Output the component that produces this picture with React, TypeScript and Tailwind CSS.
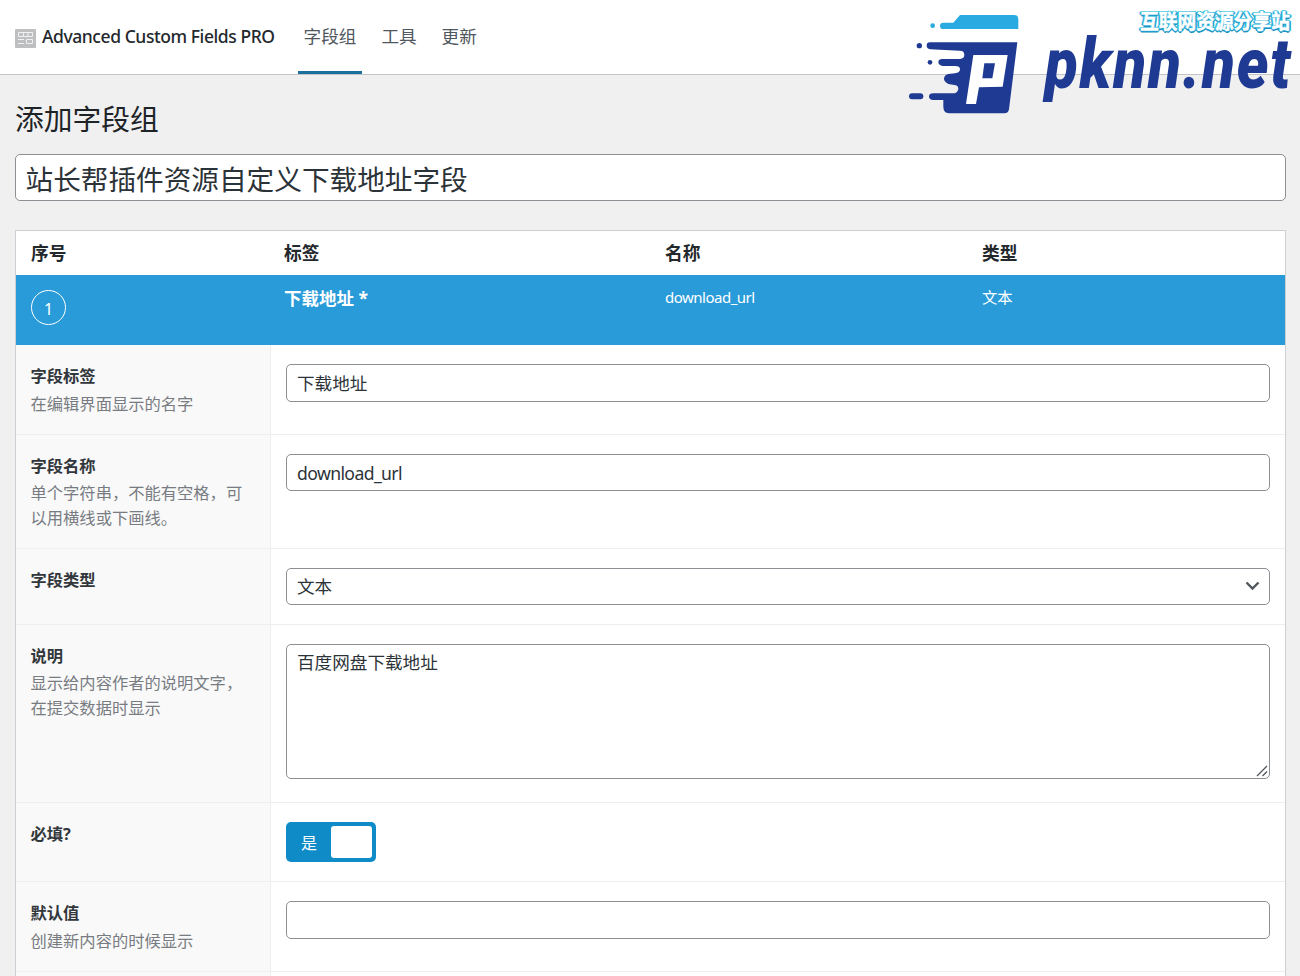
import React from "react";

const fieldCls =
  "block w-full rounded-[5px] border border-[#8c8f94] bg-white px-[10px] text-[17.6px] text-[#2c3338] outline-none";

function Row({
  label,
  desc,
  h,
  gap = "mt-[2px]",
  children,
}: {
  label: string;
  desc?: string[];
  h: string;
  gap?: string;
  children?: React.ReactNode;
}) {
  return (
    <div className={`flex border-b border-[#eeeeee] ${h}`}>
      <div className="w-[255px] shrink-0 border-r border-[#eeeeee] bg-[#f9f9f9] pl-[14.5px] pt-[19px]">
        <div className="text-[16.3px] font-bold leading-[25px] text-[#32373c]">{label}</div>
        {desc && (
          <div className={`${gap} text-[16.3px] leading-[25px] text-[#787c82]`}>
            {desc.map((d) => (
              <div key={d}>{d}</div>
            ))}
          </div>
        )}
      </div>
      <div className="flex-1 px-[15px] pt-[19px]">{children}</div>
    </div>
  );
}

function Logo() {
  return (
    <div className="pointer-events-none absolute left-[905px] top-0 h-[120px] w-[395px]">
      <svg className="absolute left-0 top-[10px]" width="120" height="108" viewBox="0 0 360 324">
        <circle cx="83" cy="47" r="7" fill="#29abe2" />
        <path
          d="M115,38 L145,38 L165,15 L328,15 Q340,15 340,27 L340,57 L115,57 Q105,57 105,47 Q105,38 115,38 Z"
          fill="#29abe2"
        />
        <circle cx="43" cy="107" r="8" fill="#1f3a93" />
        <circle cx="75" cy="157" r="7" fill="#1f3a93" />
        <rect x="12" y="250" width="43" height="18" rx="9" fill="#1f3a93" />
        <path
          d="M75,97 L337,97 L312,298 Q310,310 298,310 L135,310 Q115,310 115,290 L115,270 L85,270 Q72,268 72,260 Q72,250 85,250 L150,250 Q160,245 160,235 Q158,225 148,225 L130,222 Q117,215 117,207 Q117,195 130,192 L150,190 Q165,188 165,178 Q165,168 150,168 L112,168 Q100,165 100,157 Q100,147 112,147 L165,147 Q178,145 178,135 Q178,122 165,122 L75,118 Q65,115 65,107 Q65,97 75,97 Z"
          fill="#1f3a93"
        />
        <path
          d="M205,135 L308,135 L293,230 L222,232 L213,282 L183,282 Z M238,160 L232,205 L262,205 L270,160 Z"
          fill="#ffffff"
          fillRule="evenodd"
        />
      </svg>
      <div className="absolute left-[235px] top-[7px] scale-y-[1.1] whitespace-nowrap text-[18.75px] font-bold leading-[28px] text-white [-webkit-text-stroke:0.4px_#ffffff] [text-shadow:1px_1px_0_#1f9fd0,-1px_-1px_0_#35c3e0,1px_-1px_0_#35c3e0,-1px_1px_0_#1f9fd0,0_2px_0_#1a8fc0,2px_0_0_#2aa9d6,-2px_0_0_#2aa9d6]">
        互联网资源分享站
      </div>
      <div className="absolute left-[140px] top-[36px] origin-left scale-x-[0.86] whitespace-nowrap font-['Roboto',sans-serif] text-[70px] font-black italic leading-[56px] tracking-[2px] text-[#1f3a93]">
        pknn.net
      </div>
    </div>
  );
}

export default function App() {
  return (
    <div className="relative h-[976px] w-[1300px] overflow-hidden bg-[#f0f0f1] font-['Noto_Sans','Noto_Sans_CJK_SC',sans-serif]">
      <header className="flex h-[75px] items-stretch border-b border-[#c3c4c7] bg-white pl-[15px]">
        <div className="flex items-center">
          <svg width="21" height="19" viewBox="0 0 21 19" className="mt-[2px]" fill="none" stroke="#f0f0f0">
            <rect width="21" height="19" rx="1" fill="#bdbfc1" stroke="none" />
            <path d="M3.5 3.5 H17.5 V7.5 H3.5 Z M8.5 3.5 V7.5 M13 3.5 V7.5" />
            <path d="M3 10.5 H9 M3 14.5 H9" />
            <path d="M11.5 10.5 H17.5 V14.5 H11.5 Z" />
          </svg>
          <span className="ml-[6px] -mt-[1px] text-[17.5px] font-medium tracking-[-0.43px] text-[#23282d]">
            Advanced Custom Fields PRO
          </span>
        </div>
        <nav className="ml-[23px] flex gap-[13px] text-[17.6px] text-[#50575e]">
          <a className="flex items-center border-b-[3px] border-[#1a6f9f] px-[6px] pt-[1px]">字段组</a>
          <a className="flex items-center border-b-[3px] border-transparent px-[6px] pt-[1px]">工具</a>
          <a className="flex items-center border-b-[3px] border-transparent px-[6px] pt-[1px]">更新</a>
        </nav>
      </header>

      <main className="pl-[15px] pr-[14px]">
        <h1 className="pt-[26px] text-[28.75px] font-normal leading-[36px] text-[#1d2327]">添加字段组</h1>
        <input
          readOnly
          value="站长帮插件资源自定义下载地址字段"
          className="mt-[17px] block h-[47px] w-full rounded-[5px] border border-[#8c8f94] bg-white px-[9.5px] text-[27.65px] text-[#2c3338] outline-none"
        />

        <section className="mt-[29px] border border-b-0 border-[#ccd0d4] bg-white">
          <div className="flex h-[44px] items-center text-[17.7px] font-bold text-[#23282d]">
            <div className="w-[268px] pl-[15px]">序号</div>
            <div className="w-[381px]">标签</div>
            <div className="w-[317px]">名称</div>
            <div>类型</div>
          </div>
          <div className="flex h-[70px] bg-[#2a9bd9] text-white">
            <div className="w-[268px] pl-[15px] pt-[15px]">
              <div className="flex h-[35px] w-[35px] items-center justify-center rounded-full border border-white pt-[2px] text-[16px]">
                1
              </div>
            </div>
            <div className="w-[381px] pt-[11px] text-[17.5px] font-bold leading-[25px]">下载地址 *</div>
            <div className="w-[317px] pt-[10px] text-[15px] leading-[25px] tracking-[-0.5px]">download_url</div>
            <div className="pt-[10px] text-[15.3px] leading-[25px]">文本</div>
          </div>

          <Row label="字段标签" desc={["在编辑界面显示的名字"]} h="h-[90px]" gap="mt-[3px]">
            <input readOnly value="下载地址" className={`${fieldCls} h-[38px] pb-[2px]`} />
          </Row>
          <Row label="字段名称" desc={["单个字符串，不能有空格，可", "以用横线或下画线。"]} h="h-[114px]">
            <input readOnly value="download_url" className={`${fieldCls} h-[37px] tracking-[-0.6px]`} />
          </Row>
          <Row label="字段类型" h="h-[76px]">
            <div className="relative">
              <select className={`${fieldCls} h-[37px] appearance-none`} defaultValue="文本">
                <option>文本</option>
              </select>
              <svg
                className="absolute right-[10px] top-[12px]"
                width="15"
                height="12"
                viewBox="0 0 15 12"
                fill="none"
                stroke="#50575e"
                strokeWidth="2.4"
              >
                <path d="M1.5 2.5 L7.5 8.5 L13.5 2.5" />
              </svg>
            </div>
          </Row>
          <Row label="说明" desc={["显示给内容作者的说明文字，", "在提交数据时显示"]} h="h-[178px]">
            <div className="relative">
              <textarea
                readOnly
                value="百度网盘下载地址"
                className={`${fieldCls} h-[135px] resize-none pb-[4px] pt-[5px] leading-[25px]`}
              />
              <svg
                className="absolute bottom-[2px] right-[2px]"
                width="13"
                height="13"
                viewBox="0 0 13 13"
                fill="none"
                stroke="#50575e"
                strokeWidth="1.3"
              >
                <path d="M2 12 L12 2 M7.5 12 L12 7.5" />
              </svg>
            </div>
          </Row>
          <Row label="必填?" h="h-[79px]">
            <div className="relative flex h-[40px] w-[90px] items-center rounded-[5px] bg-[#0f8bc8] pl-[15px] pt-[2px] text-[16px] text-white">
              是
              <div className="absolute right-[4px] top-[4px] h-[32px] w-[41px] rounded-[3px] bg-white" />
            </div>
          </Row>
          <Row label="默认值" desc={["创建新内容的时候显示"]} h="h-[90px]" gap="mt-[3px]">
            <input readOnly value="" className={`${fieldCls} h-[38px]`} />
          </Row>
          <Row label="" h="h-[100px]" />
        </section>
      </main>

      <Logo />
    </div>
  );
}
